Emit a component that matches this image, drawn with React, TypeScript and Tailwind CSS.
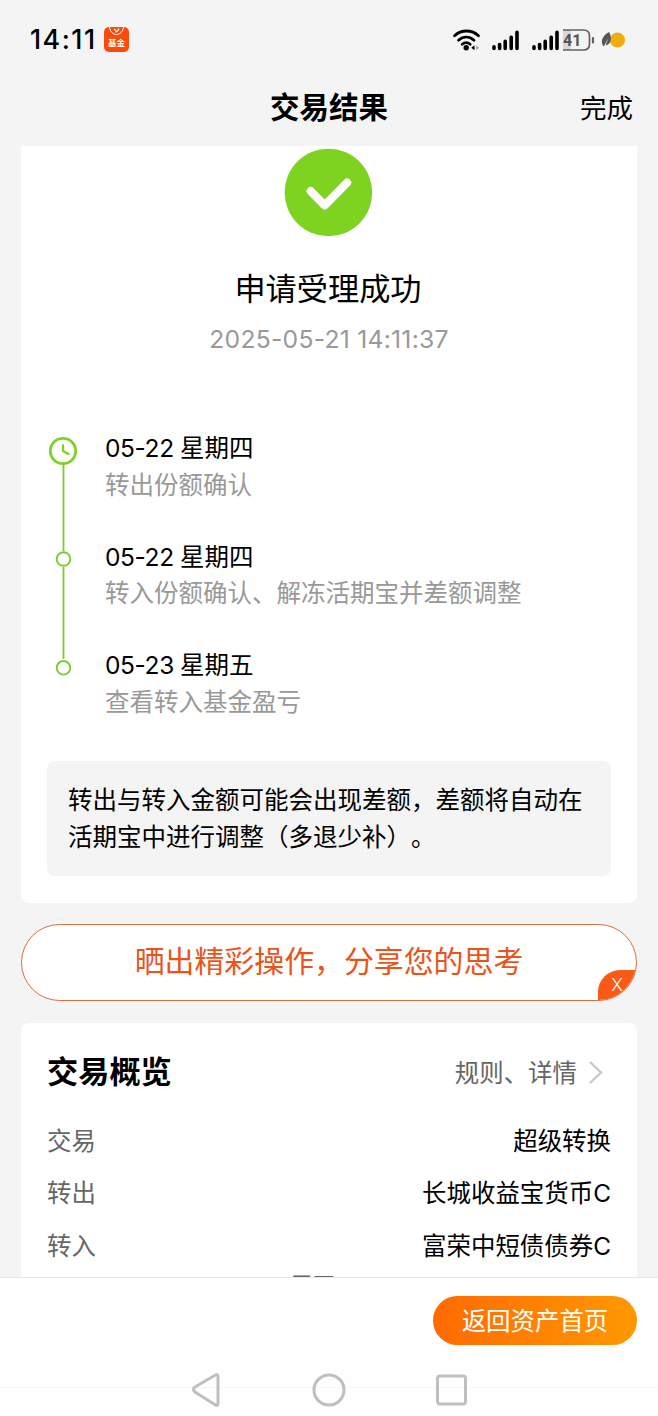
const steps = [
  { date: "05-22", day: "星期四", text: "转出份额确认" },
  { date: "05-22", day: "星期四", text: "转入份额确认、解冻活期宝并差额调整" },
  { date: "05-23", day: "星期五", text: "查看转入基金盈亏" },
];

const rows = [
  { label: "交易", value: "超级转换" },
  { label: "转出", value: "长城收益宝货币C" },
  { label: "转入", value: "富荣中短债债券C" },
];

const Signal = () => (
  <svg width="28" height="22" viewBox="0 0 28 22" stroke="#000" strokeWidth="3.6" strokeLinecap="round">
    <path d="M3 17.8v1.6M8.6 15.6v3.8M14.2 12.4v7M20.200 8.2v11.2M26 3.2v16.2" />
  </svg>
);

const StatusBar = () => (
  <div className="flex h-[78px] shrink-0 items-center pl-[30px] pr-[32px] pt-px">
    <span className="w-[74px] text-[26.8px] font-medium leading-none tracking-[1.5px]">14:11</span>
    <div className="relative flex h-[25px] w-[25px] flex-col items-center justify-end overflow-hidden rounded-[5px] bg-[#fc4a08]">
      <svg className="absolute left-0 top-0" width="25" height="12" viewBox="0 0 25 12" fill="none" stroke="#fff">
        <path d="M5.5 0c.5 4.5 3.5 7.5 7 7.5s6.5-3 7-7.5" />
        <path d="M10 2l2 1.500M15 1.500l-1.500 2.500-2 1" strokeWidth="1.4" />
      </svg>
      <span className="mb-[4px] text-[8.5px] font-bold leading-[9px] text-white">基金</span>
    </div>
    <div className="ml-auto flex items-center">
      <svg width="29" height="24" viewBox="0 0 29 24" fill="none" stroke="#000" strokeWidth="2.8" strokeLinecap="round">
        <path d="M2.500 7.700c7-6.300 17-6.300 24 0M6.500 12.200c4.800-4.200 10.700-4.200 15.500 0M10.200 16.300c2.500-2.100 5.500-2.100 8 0" />
        <circle cx="14.2" cy="19.7" r="2.7" fill="#000" stroke="none" />
        <path d="M22.500 17.200v5l-3.200-2.500z" fill="#000" stroke="none" />
        <path d="M24 17.200v5l3.200-2.500z" fill="#aaa" stroke="none" />
      </svg>
      <div className="ml-[10px] flex gap-[12px]">
        <Signal />
        <Signal />
      </div>
      <svg className="ml-[4px]" width="33" height="24" viewBox="0 0 33 24">
        <path d="M0 2h8v20H0z" fill="#d8d8d8" />
        <path d="M0 2h20.500q6 0 6 6v8q0 6-6 6H0" fill="none" stroke="#626262" strokeWidth="1.7" />
        <path d="M30 10v4.500" stroke="#626262" strokeWidth="2.2" strokeLinecap="round" />
        <text x="0" y="18" fontFamily="Roboto" fontSize="16" fontWeight="700" fill="#555">41</text>
      </svg>
      <svg className="ml-[4px]" width="26" height="20" viewBox="0 0 26 20">
        <circle cx="17.5" cy="10" r="7.6" fill="#f0ad10" />
        <path d="M9 2c3 4.500 3 12-3.500 13.500L8.500 8l-4.800 8.500C0 12 2 6 9 2z" fill="#555" />
      </svg>
    </div>
  </div>
);

const TitleBar = () => (
  <div className="grid h-[68px] shrink-0 grid-cols-3 items-center pb-[8px] pr-[25px]">
    <span />
    <h1 className="pl-[25px] text-center text-[29.5px] font-bold leading-none whitespace-nowrap">交易结果</h1>
    <button className="pt-px text-right text-[26.5px] leading-none">完成</button>
  </div>
);

const Timeline = () => (
  <div className="mt-[77px] flex pl-[27px]">
    <svg className="mt-[5px] shrink-0" width="30" height="250" viewBox="0 0 30 250" fill="none" stroke="#80c836">
      <path d="M15.500 29v87M15.500 132v92" strokeWidth="1.8" />
      <circle cx="15" cy="16" r="12.7" stroke="#7fd02b" strokeWidth="2.8" />
      <path d="M15 10.500v5.500l5.500 3" stroke="#7fd02b" strokeWidth="2.4" strokeLinecap="round" strokeLinejoin="round" />
      <circle cx="15.5" cy="124" r="6.8" strokeWidth="1.9" />
      <circle cx="15.5" cy="232.8" r="6.8" strokeWidth="1.9" />
    </svg>
    <ul className="flex flex-col gap-[36.7px] pl-[27px]">
      {steps.map((step, i) => (
        <li key={i} className="h-[72px] text-[24.5px] leading-[36.8px] whitespace-nowrap">
          <p className="flex">
            <span className="w-[75px] tracking-[-0.4px]">{step.date}</span>
            {step.day}
          </p>
          <p className="text-[#999]">{step.text}</p>
        </li>
      ))}
    </ul>
  </div>
);

const ResultCard = () => (
  <section className="flex h-[757px] shrink-0 flex-col rounded-b-lg bg-white">
    <svg className="mx-auto mt-[2px] block shrink-0" width="90" height="90" viewBox="0 0 90 90" fill="none">
      <circle cx="44.4" cy="44.5" r="43.8" fill="#7ed321" />
      <path d="M26.700 43.200l14 14.200 22.400-22.800" stroke="#fff" strokeWidth="8.2" strokeLinecap="round" strokeLinejoin="round" />
    </svg>
    <h2 className="mt-[31px] pr-[2px] text-center text-[31.2px] leading-[40px]">申请受理成功</h2>
    <p className="mt-[16px] text-center text-[24.7px] leading-[28px] tracking-[0.25px] text-[#999]">2025-05-21 14:11:37</p>
    <Timeline />
    <div className="mx-[26px] mb-[27px] mt-auto h-[115px] rounded-lg bg-[#f4f4f4] pl-[21px] pt-[21px] text-[24.5px] leading-[36.500px] [text-spacing-trim:space-all]">
      <p className="whitespace-nowrap">转出与转入金额可能会出现差额，差额将自动在</p>
      <p className="whitespace-nowrap">活期宝中进行调整（多退少补）。</p>
    </div>
  </section>
);

const ShareBanner = () => (
  <div className="relative mt-[21px] flex h-[77px] shrink-0 justify-center overflow-hidden rounded-full border border-[#d4713f] bg-white pt-[14px]">
    <span className="text-[29.9px] leading-[44px] text-[#ea5419]">晒出精彩操作，分享您的思考</span>
    <button className="absolute bottom-0 right-0 h-[30px] w-[38px] rounded-tl-[22px] bg-[#fb5a14] pb-px text-[17.5px] font-light leading-[28px] text-white">
      X
    </button>
  </div>
);

const OverviewCard = () => (
  <section className="mt-[22px] h-[300px] shrink-0 rounded-t-lg bg-white px-[26px]">
    <div className="flex h-[100px] items-center justify-between pr-[7px]">
      <h2 className="text-[31.2px] font-bold leading-none">交易概览</h2>
      <a className="flex items-center text-[24.45px] leading-none text-[#666]">
        规则、详情
        <svg className="ml-[11px]" width="16" height="24" viewBox="0 0 16 24" fill="none" stroke="#c8c8c8" strokeWidth="2.4">
          <path d="M2 1l11 10.500L2 22" />
        </svg>
      </a>
    </div>
    <div className="-mt-[8px]">
      {rows.map((row) => (
        <div key={row.label} className="flex h-[52.3px] items-center justify-between text-[24.45px] leading-none">
          <span className="text-[#666]">{row.label}</span>
          <span>{row.value}</span>
        </div>
      ))}
    </div>
    <div className="mt-px flex justify-center pr-[33px] text-[22.5px] leading-[26px] text-[#666]">展开</div>
  </section>
);

const Footer = () => (
  <footer className="flex h-[139px] shrink-0 flex-col border-t border-[#e8e8e8] bg-[#fefefe]">
    <button className="ml-auto mr-[21px] mt-[18px] h-[49px] w-[204px] rounded-full bg-linear-to-r from-[#ff6a00] to-[#ff9800] pt-px text-[24.45px] leading-none text-white">
      返回资产首页
    </button>
    <svg className="mt-auto" width="658" height="52" viewBox="0 0 658 52" fill="none" stroke="#bfbfbf" strokeWidth="3" strokeLinejoin="round">
      <path d="M0 23.500h658" stroke="#f6f6f6" strokeWidth="1" />
      <path d="M218 12.500v27q0 2.500-2.500 1.500L195 28q-3-2.500 0-5L215.500 11q2.500-1 2.500 1.500z" />
      <circle cx="329" cy="26" r="15" />
      <rect x="437.5" y="12" width="28" height="28" rx="2.5" />
    </svg>
  </footer>
);

export default function App() {
  return (
    <div lang="zh-CN" className="flex h-[1416px] w-[658px] flex-col overflow-hidden bg-[#f4f4f4] font-['Inter','Noto_Sans_CJK_SC',sans-serif] text-black">
      <StatusBar />
      <TitleBar />
      <main className="flex min-h-0 flex-1 flex-col overflow-hidden px-[21px]">
        <ResultCard />
        <ShareBanner />
        <OverviewCard />
      </main>
      <Footer />
    </div>
  );
}
